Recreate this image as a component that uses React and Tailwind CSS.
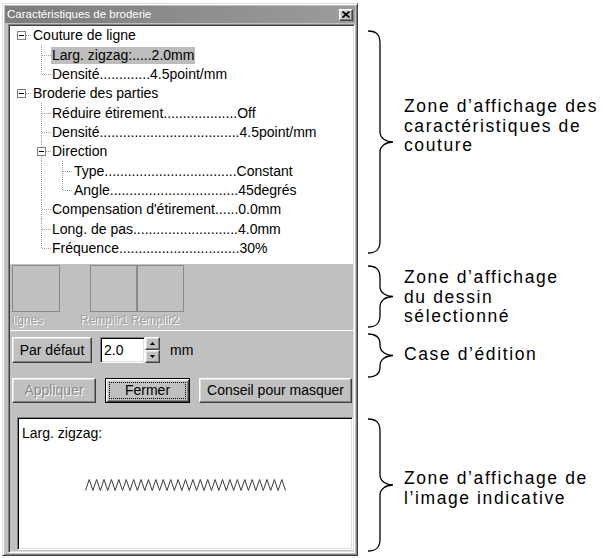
import React from 'react';

// tree rows: lv = depth, v = vertical guide lines [x, runsFullHeight]
const rows = [
  { h: 'h-[19px]', hh: 19, lv: 0, label: 'Couture de ligne', box: true },
  { h: 'h-[20px]', hh: 20, lv: 1, label: 'Larg. zigzag:', dots: 5, value: '2.0mm', sel: true, v: [[31, 1]] },
  { h: 'h-[19px]', hh: 19, lv: 1, label: 'Densité', dots: 13, value: '4.5point/mm', v: [[31, 0]] },
  { h: 'h-[19px]', hh: 19, lv: 0, label: 'Broderie des parties', box: true },
  { h: 'h-[20px]', hh: 20, lv: 1, label: 'Réduire étirement', dots: 19, value: 'Off', v: [[31, 1]] },
  { h: 'h-[19px]', hh: 19, lv: 1, label: 'Densité', dots: 36, value: '4.5point/mm', v: [[31, 1]] },
  { h: 'h-[19px]', hh: 19, lv: 1, label: 'Direction', box: true, v: [[31, 1]] },
  { h: 'h-[20px]', hh: 20, lv: 2, label: 'Type', dots: 34, value: 'Constant', v: [[31, 1], [52, 1]] },
  { h: 'h-[19px]', hh: 19, lv: 2, label: 'Angle', dots: 33, value: '45degrés', v: [[31, 1], [52, 0]] },
  { h: 'h-[19px]', hh: 19, lv: 1, label: "Compensation d'étirement", dots: 6, value: '0.0mm', v: [[31, 1]] },
  { h: 'h-[20px]', hh: 20, lv: 1, label: 'Long. de pas', dots: 27, value: '4.0mm', v: [[31, 1]] },
  { h: 'h-[19px]', hh: 19, lv: 1, label: 'Fréquence', dots: 31, value: '30%', v: [[31, 0]] },
];

const TEXT_X = [23, 42, 64];
const LINE_X = [11, 31, 52];

function TreeRow({ r }) {
  const tx = TEXT_X[r.lv];
  const lx = LINE_X[r.lv];
  const cy = Math.floor(r.hh / 2);
  return (
    <div className={`flex items-center ${r.h}`}>
      <svg width={tx - 1} height={r.hh} className="shrink-0">
        {(r.v || []).map(([x, full], i) => (
          <line key={i} x1={x + 0.5} y1={0} x2={x + 0.5} y2={full ? r.hh : cy + 0.5}
            stroke="#a0a0a0" strokeDasharray="1 1" />
        ))}
        <line x1={r.box ? lx + 5 : lx + 1} y1={cy + 0.5} x2={tx - 1} y2={cy + 0.5}
          stroke="#a0a0a0" strokeDasharray="1 1" />
        {r.box && (
          <g>
            <rect x={lx - 4 + 0.5} y={cy - 4 + 0.5} width="8" height="8" fill="#fff" stroke="#808080" />
            <line x1={lx - 2} y1={cy + 0.5} x2={lx + 3} y2={cy + 0.5} stroke="#000" />
          </g>
        )}
      </svg>
      <span className={`whitespace-nowrap px-[1px] leading-[17px] ${r.sel ? 'bg-[#bdbdbd]' : ''}`}>
        {r.value ? r.label + '.'.repeat(r.dots) + r.value : r.label}
      </span>
    </div>
  );
}

const raised = 'border border-white border-r-[#404040] border-b-[#404040] shadow-[inset_-1px_-1px_0_#808080,inset_1px_1px_0_#dfdfdf] bg-[#c0c0c0]';
const sunken = 'border border-[#808080] border-r-white border-b-white shadow-[inset_1px_1px_0_#000,inset_-1px_-1px_0_#dfdfdf]';

function Zigzag() {
  const n = 27;
  const w = 200;
  const seg = w / (n * 2);
  const pts = [];
  for (let i = 0; i <= n * 2; i++) {
    pts.push(`${(i * seg + 0.5).toFixed(2)},${i % 2 === 0 ? 11.5 : 0.5}`);
  }
  return (
    <svg width={w + 1} height="12" className="mx-auto block">
      <polyline points={pts.join(' ')} fill="none" stroke="#3a3a3a" strokeWidth="1" />
    </svg>
  );
}

function Window() {
  return (
    <div className="ml-[2px] mt-[3px] w-[356px] h-[553px] flex flex-col bg-[#c0c0c0] border border-[#dfdfdf] border-r-[#404040] border-b-[#404040] shadow-[inset_1px_1px_0_#ffffff,inset_-1px_-1px_0_#808080] p-[2px]">
      <div className="h-[17px] flex items-center justify-between bg-linear-to-r from-[#7c7c7c] to-[#9c9c9c] pl-[2px] pr-[2px]">
        <span className="text-[11.5px] text-white leading-none">Caractéristiques de broderie</span>
        <div className={`w-[14px] h-[12px] flex items-center justify-center ${raised}`}>
          <svg width="8" height="7">
            <path d="M0.5 0.5 L7.5 6.5 M7.5 0.5 L0.5 6.5" stroke="#000" strokeWidth="1.7" />
          </svg>
        </div>
      </div>

      <div className="mt-[1px] ml-[3px] flex-1 flex flex-col border border-[#808080] border-r-white border-b-white shadow-[inset_1px_1px_0_#404040,inset_-1px_-1px_0_#dfdfdf] p-[1px] text-[14px]">
        <div className="h-[238px] bg-white">
          {rows.map((r, i) => <TreeRow key={i} r={r} />)}
        </div>

        <div className="h-[66px] flex flex-col pt-[1px]">
          <div className="flex">
            <div className="ml-[2px] w-[48px] h-[47px] border border-[#8a8a8a]" />
            <div className="ml-[30px] w-[47px] h-[47px] border border-[#8a8a8a]" />
            <div className="w-[47px] h-[47px] border border-[#8a8a8a]" />
          </div>
          <div className="flex mt-[1px] text-[12px] leading-[15px] text-[#a0a0a0] [text-shadow:1px_1px_0_#ffffff]">
            <span className="ml-[2px] w-[68px]">lignes</span>
            <span className="w-[51px]">Remplir1</span>
            <span>Remplir2</span>
          </div>
        </div>
        <div className="h-[1px] bg-white" />

        <div className="mt-[6px] h-[26px] flex items-center">
          <div className={`ml-[2px] w-[80px] h-[26px] flex items-center justify-center ${raised}`}>Par défaut</div>
          <div className={`ml-[8px] w-[45px] h-[26px] bg-white flex items-center pl-[3px] ${sunken}`}>2.0</div>
          <div className="w-[15px] h-[26px] flex flex-col">
            <div className={`h-[13px] flex items-center justify-center ${raised}`}>
              <svg width="5" height="3"><path d="M2.5 0 L5 3 L0 3 Z" fill="#000" /></svg>
            </div>
            <div className={`h-[13px] flex items-center justify-center ${raised}`}>
              <svg width="5" height="3"><path d="M0 0 L5 0 L2.5 3 Z" fill="#000" /></svg>
            </div>
          </div>
          <span className="ml-[10px]">mm</span>
        </div>

        <div className="mt-[15px] h-[25px] flex">
          <div className={`ml-[2px] w-[84px] flex items-center justify-center text-[#8a8a8a] [text-shadow:1px_1px_0_#ffffff] ${raised}`}>Appliquer</div>
          <div className="ml-[9px] w-[85px] p-[3px] border border-black bg-[#c0c0c0] shadow-[inset_1px_1px_0_#ffffff,inset_-1px_-1px_0_#404040,inset_2px_2px_0_#dfdfdf,inset_-2px_-2px_0_#808080]">
            <div className="h-full border border-dotted border-black flex items-center justify-center">Fermer</div>
          </div>
          <div className={`ml-[9px] w-[153px] flex items-center justify-center ${raised}`}>Conseil pour masquer</div>
        </div>

        <div className={`mt-[14px] ml-[7px] mb-[1px] flex-1 bg-white p-[1px] ${sunken}`}>
          <div className="pt-[6px] pl-[3px] leading-[16px]">Larg. zigzag:</div>
          <div className="mt-[38px]">
            <Zigzag />
          </div>
        </div>
      </div>
    </div>
  );
}

function Brace({ h }) {
  const m = h / 2;
  const c = Math.min(12, h / 4 - 1);
  const t = Math.min(10, h / 4 - 1);
  const d = `M1 1 C${1 + c * 0.7} 1 13 ${1 + c * 0.3} 13 ${1 + c} L13 ${m - t} C13 ${m - t * 0.4} 19 ${m} 26 ${m} C19 ${m} 13 ${m + t * 0.4} 13 ${m + t} L13 ${h - 1 - c} C13 ${h - 1 - c * 0.3} ${1 + c * 0.7} ${h - 1} 1 ${h - 1}`;
  return (
    <svg width="28" height={h} className="shrink-0">
      <path d={d} fill="none" stroke="#000" strokeWidth="1.3" />
    </svg>
  );
}

function Note({ h, children, hClass, mtClass, tmtClass }) {
  return (
    <div className={`flex items-start ${hClass} ${mtClass}`}>
      <Brace h={h} />
      <div className={`ml-[9px] text-[17.5px] leading-[19.5px] tracking-[1.6px] whitespace-nowrap ${tmtClass}`}>
        {children}
      </div>
    </div>
  );
}

function Annotations() {
  return (
    <div className="ml-[9px] flex flex-col">
      <Note h={224} hClass="h-[224px]" mtClass="mt-[30px]" tmtClass="mt-[67px]">
        <div>Zone d’affichage des</div>
        <div>caractéristiques de</div>
        <div>couture</div>
      </Note>
      <Note h={63} hClass="h-[63px]" mtClass="mt-[11px]" tmtClass="mt-[3px]">
        <div>Zone d’affichage</div>
        <div>du dessin</div>
        <div>sélectionné</div>
      </Note>
      <Note h={45} hClass="h-[45px]" mtClass="mt-[5px]" tmtClass="mt-[12px]">
        <div>Case d’édition</div>
      </Note>
      <Note h={134} hClass="h-[134px]" mtClass="mt-[40px]" tmtClass="mt-[51px]">
        <div>Zone d’affichage de</div>
        <div>l’image indicative</div>
      </Note>
    </div>
  );
}

export default function App() {
  return (
    <div className="w-[604px] h-[558px] bg-white flex items-start overflow-hidden font-['Liberation_Sans',Arial,sans-serif] text-black">
      <Window />
      <Annotations />
    </div>
  );
}
